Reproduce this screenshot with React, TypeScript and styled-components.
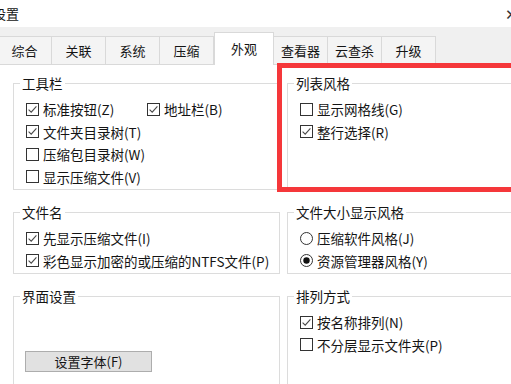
import React from "react";
import styled, { createGlobalStyle } from "styled-components";

const GlobalStyle = createGlobalStyle`
  html, body {
    margin: 0;
    padding: 0;
    background: #fff;
  }
  body {
    font-family: "Noto Sans CJK SC", "Noto Sans", sans-serif;
  }
`;

const Window = styled.div`
  position: relative;
  width: 511px;
  height: 384px;
  overflow: hidden;
  background: #fff;
  font-size: 13.5px;
  color: #141414;
`;

const TitleBar = styled.div`
  height: 27px;
  display: flex;
  align-items: center;
  justify-content: space-between;
`;

const Title = styled.span`
  margin-left: -7px;
  font-size: 13px;
  line-height: 16px;
`;

const Close = styled.span`
  margin-right: -7px;
  font-size: 15px;
  color: #333;
`;

const TabStrip = styled.div`
  height: 38px;
  display: flex;
  align-items: flex-end;
  margin-left: -2px;
  background: #f0f0f0;
`;

const Tab = styled.div<{ $active?: boolean }>`
  box-sizing: border-box;
  width: ${(p) => (p.$active ? 60 : 55)}px;
  height: ${(p) => (p.$active ? 33 : 29)}px;
  display: flex;
  align-items: center;
  justify-content: center;
  font-size: 13px;
  background: ${(p) => (p.$active ? "#fff" : "#f4f4f4")};
  border: 1px solid #d9d9d9;
  border-bottom: ${(p) => (p.$active ? "none" : "1px solid #d9d9d9")};
  margin-left: ${(p) => (p.$active ? 0 : -1)}px;
  padding-bottom: ${(p) => (p.$active ? 2 : 0)}px;
`;

const TabFill = styled.div`
  flex: 1;
  align-self: stretch;
  border-bottom: 1px solid #d9d9d9;
`;

const Panel = styled.div`
  display: grid;
  grid-template-columns: 267px 260px;
  grid-template-rows: auto auto 110px;
  column-gap: 7px;
  row-gap: 14px;
  padding: 10px 0 0 13px;
`;

const Group = styled.fieldset`
  margin: 0;
  min-width: 0;
  padding: 7px 0 1px 12px;
  border: 1px solid #dcdcdc;
`;

const Legend = styled.legend`
  margin-left: -6px;
  padding: 0 2px;
  line-height: 16px;
`;

const Row = styled.div`
  display: flex;
  align-items: center;
  height: 22.5px;
`;

const Option = styled.label<{ $w?: number }>`
  display: inline-flex;
  align-items: center;
  gap: 4px;
  white-space: nowrap;
  ${(p) => (p.$w ? `min-width: ${p.$w}px;` : "")}
`;

const Box = styled.svg`
  flex: none;
  width: 13px;
  height: 13px;
`;

const ButtonRow = styled.div`
  padding-top: 40px;
  margin-left: -1px;
`;

const Button = styled.div`
  box-sizing: border-box;
  width: 127px;
  height: 21px;
  display: flex;
  align-items: center;
  justify-content: center;
  background: #e1e1e1;
  border: 1px solid #adadad;
  font-size: 13px;
`;

const Highlight = styled.div`
  position: absolute;
  left: 277px;
  top: 63px;
  width: 246px;
  height: 129px;
  box-sizing: border-box;
  border: 5px solid #f5373a;
  pointer-events: none;
`;

const Check = ({ on }: { on?: boolean }) => (
  <Box viewBox="0 0 13 13">
    <rect x="0.5" y="0.5" width="12" height="12" fill="#fff" stroke="#333" />
    {on && (
      <path d="M2.6 6.6 L5.2 9.2 L10.4 3.4" fill="none" stroke="#4a4a4a" strokeWidth="1.1" />
    )}
  </Box>
);

const Radio = ({ on }: { on?: boolean }) => (
  <Box viewBox="0 0 13 13">
    <circle cx="6.5" cy="6.5" r="6" fill="#fff" stroke="#333" />
    {on && <circle cx="6.5" cy="6.5" r="3.2" fill="#111" />}
  </Box>
);

const tabs = ["综合", "关联", "系统", "压缩", "外观", "查看器", "云查杀", "升级"];

export default function App() {
  return (
    <Window>
      <GlobalStyle />
      <TitleBar>
        <Title>设置</Title>
        <Close>✕</Close>
      </TitleBar>
      <TabStrip>
        {tabs.map((t) => (
          <Tab key={t} $active={t === "外观"}>
            {t}
          </Tab>
        ))}
        <TabFill />
      </TabStrip>
      <Panel>
        <Group>
          <Legend>工具栏</Legend>
          <Row>
            <Option $w={121}>
              <Check on />
              标准按钮(Z)
            </Option>
            <Option>
              <Check on />
              地址栏(B)
            </Option>
          </Row>
          <Row>
            <Option>
              <Check on />
              文件夹目录树(T)
            </Option>
          </Row>
          <Row>
            <Option>
              <Check />
              压缩包目录树(W)
            </Option>
          </Row>
          <Row>
            <Option>
              <Check />
              显示压缩文件(V)
            </Option>
          </Row>
        </Group>
        <Group>
          <Legend>列表风格</Legend>
          <Row>
            <Option>
              <Check />
              显示网格线(G)
            </Option>
          </Row>
          <Row>
            <Option>
              <Check on />
              整行选择(R)
            </Option>
          </Row>
        </Group>
        <Group>
          <Legend>文件名</Legend>
          <Row>
            <Option>
              <Check on />
              先显示压缩文件(I)
            </Option>
          </Row>
          <Row>
            <Option>
              <Check on />
              彩色显示加密的或压缩的NTFS文件(P)
            </Option>
          </Row>
        </Group>
        <Group>
          <Legend>文件大小显示风格</Legend>
          <Row>
            <Option>
              <Radio />
              压缩软件风格(J)
            </Option>
          </Row>
          <Row>
            <Option>
              <Radio on />
              资源管理器风格(Y)
            </Option>
          </Row>
        </Group>
        <Group>
          <Legend>界面设置</Legend>
          <ButtonRow>
            <Button>设置字体(F)</Button>
          </ButtonRow>
        </Group>
        <Group>
          <Legend>排列方式</Legend>
          <Row>
            <Option>
              <Check on />
              按名称排列(N)
            </Option>
          </Row>
          <Row>
            <Option>
              <Check />
              不分层显示文件夹(P)
            </Option>
          </Row>
        </Group>
      </Panel>
      <Highlight />
    </Window>
  );
}
